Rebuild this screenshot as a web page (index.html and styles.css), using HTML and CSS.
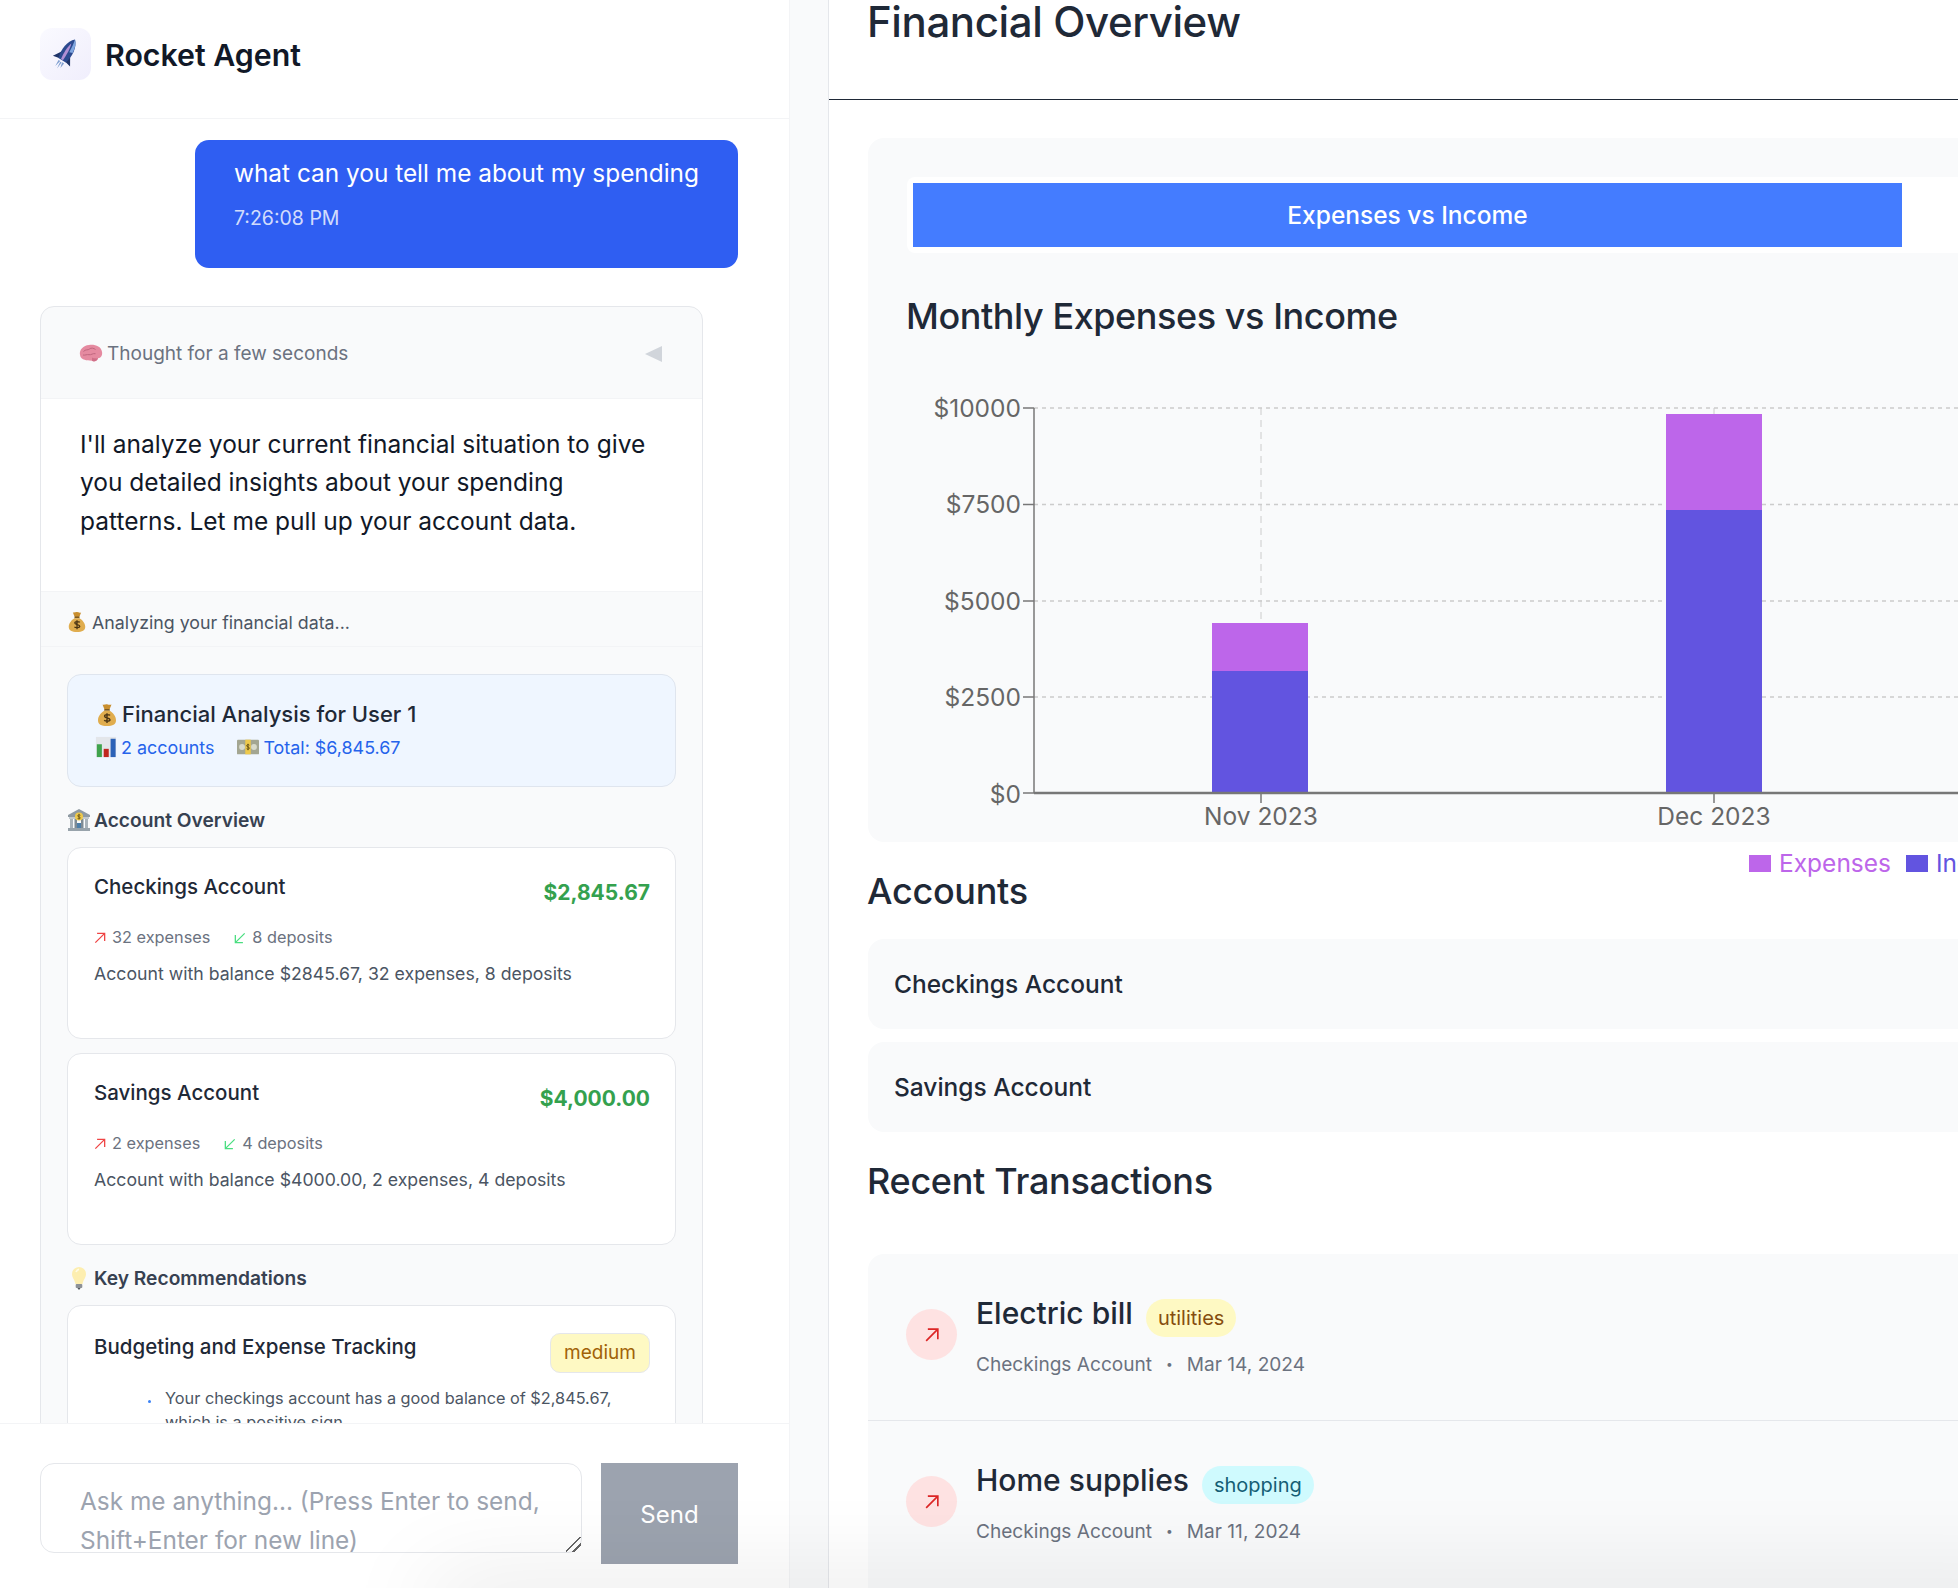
FILE: index.html
```html
<!DOCTYPE html>
<html lang="en">
<head>
  <meta charset="UTF-8" />
  <title>Rocket Agent</title>
  <link rel="stylesheet" href="styles.css">
</head>
<body>
  <svg class="icon-defs" aria-hidden="true">
    <symbol id="i-bag" viewBox="0 0 24 24">
      <path d="M7.500 1.500c1.500.8 3-.6 4.500-.3s3 1 4.500.3l-2 5H9.500z" fill="#c98f2f"/>
      <path d="M9.500 6h5l.4 1.800H9.100z" fill="#7d5a22"/>
      <path d="M9.300 7.800h5.400c3.300 2 6.300 5.500 6.300 9.500 0 4.200-3.300 5.700-9 5.700s-9-1.500-9-5.700c0-4 3-7.500 6.300-9.500z" fill="#e0ad4e"/>
      <path d="M15 12.400c-.6-.9-5.400-1.300-5.400.8 0 2.200 5.400 1.300 5.400 3.500 0 2-4.800 1.700-5.800.6M12 10.200v9.800" fill="none" stroke="#4a3413" stroke-width="1.400"/>
    </symbol>
    <symbol id="i-chart" viewBox="0 0 24 24">
      <rect x="1" y="1" width="22" height="22" fill="#e3e6ea"/>
      <rect x="2" y="9" width="5.500" height="14" fill="#3fa34d"/>
      <rect x="9.500" y="14" width="5.500" height="9" fill="#c0271f"/>
      <rect x="17" y="3" width="5.500" height="20" fill="#2b62b8"/>
    </symbol>
    <symbol id="i-note" viewBox="0 0 24 24">
      <rect x="0" y="4" width="24" height="16" rx="1" fill="#a3a692"/>
      <circle cx="5.500" cy="12" r="3.200" fill="#d8dacb"/>
      <circle cx="18.500" cy="12" r="3.200" fill="#d8dacb"/>
      <rect x="9" y="4" width="6" height="16" fill="#eec94b"/>
      <path d="M13.500 10c-.5-.8-3-.8-3 .7s3 .9 3 2.500-2.500 1.400-3 .7M12 8.500v7" fill="none" stroke="#5d4a12" stroke-width="1"/>
    </symbol>
    <symbol id="i-bank" viewBox="0 0 24 24">
      <path d="M12 1 23 7v2H1V7z" fill="#8f9aa3"/>
      <rect x="2" y="9" width="20" height="2" fill="#c2c9ce"/>
      <rect x="3" y="11" width="3" height="9" fill="#a9b3ba"/>
      <rect x="7.500" y="11" width="2.500" height="9" fill="#7f8b94"/>
      <rect x="14" y="11" width="2.500" height="9" fill="#7f8b94"/>
      <rect x="18" y="11" width="3" height="9" fill="#a9b3ba"/>
      <rect x="10" y="15" width="4" height="5" fill="#4d7ea8"/>
      <rect x="1" y="20" width="22" height="3" fill="#98a3ab"/>
      <circle cx="12" cy="8.500" r="4" fill="#eec94b"/>
      <path d="M13.400 7.300c-.5-.6-2.800-.6-2.800.6s2.800.8 2.800 2-2.400 1.100-2.800.6M12 5.800v5.400" fill="none" stroke="#5d4a12" stroke-width=".8"/>
    </symbol>
    <symbol id="i-bulb" viewBox="0 0 24 24">
      <path d="M12 1c4.200 0 7 3.200 7 7 0 3.500-2.600 5.500-3.500 10h-7C7.600 13.500 5 11.500 5 8c0-3.800 2.800-7 7-7z" fill="#fdeeb0"/>
      <path d="M9 6c.8-1.600 2-2.400 3-2.600" fill="none" stroke="#fffbe6" stroke-width="1.600"/>
      <rect x="8.700" y="18" width="6.600" height="4" rx="1" fill="#8d9196"/>
      <path d="M10.500 22h3l-.8 1.500h-1.400z" fill="#55585c"/>
    </symbol>
    <symbol id="i-brain" viewBox="0 0 24 24">
      <path d="M1 13C0 7.500 4.500 3.500 10 3c5.500-.8 12 1 13 6.800.7 3.700-1 6.200-4 6.500-.6 2.700-3.800 3.900-6 2.500C9.500 18.300 7.800 18.900 5.600 17.800 3.400 17.400 1.500 15.900 1 13z" fill="#e58aa0"/>
      <path d="M4.500 9.500c2-2.500 4.500-1 6-2.500s4.500-.8 6 .5M4 13c2 .5 4-.8 6-.3s4-1.700 6.500-1" fill="none" stroke="#c0677f" stroke-width="1"/>
      <path d="M13 15.500c1.800 1 4.500 1 6 .8-.6 2.700-3.800 3.700-6 2.400z" fill="#cf6f88"/>
    </symbol>
  </svg>

  <section class="chat">
    <header class="chat-head">
      <div class="logo">
        <svg class="logo-rocket" viewBox="0 0 32 32">
          <g transform="rotate(32 16 16)">
            <path d="M12 15 6.500 24l6.500-1.500zM20 15l5.500 9-6.500-1.500z" fill="#1f3468"/>
            <path d="M16 0c5.500 5 6.500 15 4 23h-8C9.500 15 10.500 5 16 0z" fill="#2c4a8f"/>
            <path d="M16 0c3 2.500 4.500 7 4.800 12l-3 1C17.500 8 17 4 16 0z" fill="#7fa6e0"/>
            <path d="M15 5c-1.500 5-1.500 12-.5 17.500h2.200C17 16 16.600 9 15 5z" fill="#b08fd4"/>
            <path d="M13 24.500h2L13.500 31zM17 24.500h2.200L18.500 30zM15.200 25h1.600L16 32z" fill="#7f9fd0"/>
          </g>
        </svg>
      </div>
      <h1 class="brand">Rocket Agent</h1>
    </header>

    <div class="messages">
      <div class="bubble">
        <p class="bubble-text">what can you tell me about my spending</p>
        <p class="bubble-time">7:26:08 PM</p>
      </div>

      <article class="reply">
        <div class="thought">
          <span class="thought-label"><svg class="emoji"><use href="#i-brain"/></svg>Thought for a few seconds</span>
          <svg class="caret" viewBox="0 0 17 16"><polygon points="17,0 17,16 0,8"/></svg>
        </div>
        <p class="reply-text">I'll analyze your current financial situation to give you detailed insights about your spending patterns. Let me pull up your account data.</p>
        <div class="status"><svg class="emoji"><use href="#i-bag"/></svg>Analyzing your financial data...</div>

        <div class="analysis">
          <div class="summary">
            <div class="summary-title"><svg class="emoji"><use href="#i-bag"/></svg>Financial Analysis for User 1</div>
            <div class="summary-meta">
              <span><svg class="emoji"><use href="#i-chart"/></svg>2 accounts</span>
              <span><svg class="emoji"><use href="#i-note"/></svg>Total: $6,845.67</span>
            </div>
          </div>

          <h4 class="section-title"><svg class="emoji"><use href="#i-bank"/></svg>Account Overview</h4>
          <div class="acct-card">
            <div class="acct-top">
              <span class="acct-name">Checkings Account</span>
              <span class="acct-amount">$2,845.67</span>
            </div>
            <div class="acct-stats">
              <span><svg class="stat-arrow up" viewBox="0 0 24 24"><path d="M4 20 20 4M7 4h13v13"/></svg>32 expenses</span>
              <span><svg class="stat-arrow down" viewBox="0 0 24 24"><path d="M20 4 4 20M4 7v13h13"/></svg>8 deposits</span>
            </div>
            <p class="acct-desc">Account with balance $2845.67, 32 expenses, 8 deposits</p>
          </div>
          <div class="acct-card">
            <div class="acct-top">
              <span class="acct-name">Savings Account</span>
              <span class="acct-amount">$4,000.00</span>
            </div>
            <div class="acct-stats">
              <span><svg class="stat-arrow up" viewBox="0 0 24 24"><path d="M4 20 20 4M7 4h13v13"/></svg>2 expenses</span>
              <span><svg class="stat-arrow down" viewBox="0 0 24 24"><path d="M20 4 4 20M4 7v13h13"/></svg>4 deposits</span>
            </div>
            <p class="acct-desc">Account with balance $4000.00, 2 expenses, 4 deposits</p>
          </div>

          <h4 class="section-title"><svg class="emoji"><use href="#i-bulb"/></svg>Key Recommendations</h4>
          <div class="acct-card">
            <div class="rec-top">
              <span class="acct-name">Budgeting and Expense Tracking</span>
              <span class="priority">medium</span>
            </div>
            <ul class="rec-list">
              <li>Your checkings account has a good balance of $2,845.67, which is a positive sign.</li>
            </ul>
          </div>
        </div>
      </article>
    </div>

    <form class="composer">
      <textarea class="composer-input" placeholder="Ask me anything... (Press Enter to send, Shift+Enter for new line)"></textarea>
      <button class="send" type="button">Send</button>
    </form>
  </section>

  <main class="overview">
    <header class="overview-head">
      <h1 class="overview-title">Financial Overview</h1>
    </header>

    <div class="overview-body">
      <section class="chart-card">
        <div class="tabs"><button class="tab" type="button">Expenses vs Income</button></div>
        <h2 class="chart-title">Monthly Expenses vs Income</h2>
        <svg class="chart" viewBox="907 360 1100 482">
          <g class="grid">
            <line x1="1034" y1="408" x2="2008" y2="408"/>
            <line x1="1034" y1="504.500" x2="2008" y2="504.500"/>
            <line x1="1034" y1="601" x2="2008" y2="601"/>
            <line x1="1034" y1="697" x2="2008" y2="697"/>
            <line class="grid-v" x1="1261" y1="408" x2="1261" y2="793"/>
            <line class="grid-v" x1="1714" y1="408" x2="1714" y2="793"/>
          </g>
          <rect class="bar-income" x="1212" y="671" width="96" height="122.500"/>
          <rect class="bar-expense" x="1212" y="623" width="96" height="48"/>
          <rect class="bar-income" x="1666" y="510" width="96" height="283.500"/>
          <rect class="bar-expense" x="1666" y="414" width="96" height="96"/>
          <g class="axis">
            <line x1="1034" y1="408" x2="1034" y2="793"/>
            <line class="axis-base" x1="1034" y1="793" x2="2008" y2="793"/>
            <line x1="1023" y1="408" x2="1034" y2="408"/>
            <line x1="1023" y1="504.500" x2="1034" y2="504.500"/>
            <line x1="1023" y1="601" x2="1034" y2="601"/>
            <line x1="1023" y1="697" x2="1034" y2="697"/>
            <line x1="1023" y1="793" x2="1034" y2="793"/>
            <line x1="1261" y1="793" x2="1261" y2="803"/>
            <line x1="1714" y1="793" x2="1714" y2="803"/>
          </g>
          <g class="tick-y">
            <text x="1021" y="417">$10000</text>
            <text x="1021" y="513">$7500</text>
            <text x="1021" y="610">$5000</text>
            <text x="1021" y="706">$2500</text>
            <text x="1021" y="803">$0</text>
          </g>
          <g class="tick-x">
            <text x="1261" y="825">Nov 2023</text>
            <text x="1714" y="825">Dec 2023</text>
          </g>
        </svg>
      </section>

      <div class="legend">
        <span class="legend-item expense"><i class="swatch"></i>Expenses</span>
        <span class="legend-item income"><i class="swatch"></i>Income</span>
      </div>

      <h2 class="section-head">Accounts</h2>
      <div class="account-row">Checkings Account</div>
      <div class="account-row">Savings Account</div>

      <h2 class="section-head recent">Recent Transactions</h2>
      <div class="tx-list">
        <div class="tx">
          <span class="tx-icon"><svg viewBox="0 0 24 24"><path d="M5 19 19 5M7 5h12v12"/></svg></span>
          <div>
            <div class="tx-top">
              <span class="tx-name">Electric bill</span>
              <span class="tag utilities">utilities</span>
            </div>
            <div class="tx-meta"><span>Checkings Account</span><span class="dot">•</span><span>Mar 14, 2024</span></div>
          </div>
        </div>
        <div class="tx">
          <span class="tx-icon"><svg viewBox="0 0 24 24"><path d="M5 19 19 5M7 5h12v12"/></svg></span>
          <div>
            <div class="tx-top">
              <span class="tx-name">Home supplies</span>
              <span class="tag shopping">shopping</span>
            </div>
            <div class="tx-meta"><span>Checkings Account</span><span class="dot">•</span><span>Mar 11, 2024</span></div>
          </div>
        </div>
      </div>
    </div>
  </main>

  <div class="edge-shadow"></div>
</body>
</html>
```

FILE: styles.css
```css
* {
  box-sizing: border-box;
}
html, body {
  height: 100%;
}
body {
  margin: 0;
  display: flex;
  overflow: hidden;
  font-family: "Inter", "Liberation Sans", sans-serif;
  background-color: #f9fafb;
  color: #111827;
}
h1, h2, h4, p, ul {
  margin: 0;
  padding: 0;
}
.icon-defs {
  position: absolute;
  width: 0;
  height: 0;
}
.emoji {
  width: 22px;
  height: 22px;
  margin: 0 4px 0 -1px;
  vertical-align: -4px;
}

/* chat column */
.chat {
  width: 790px;
  height: 1588px;
  flex: none;
  display: flex;
  flex-direction: column;
  background-color: white;
  border-right: 1px solid #f3f4f6;
}
.chat-head {
  height: 119px;
  flex: none;
  display: flex;
  align-items: flex-start;
  gap: 14px;
  padding: 28px 40px 0;
  border-bottom: 1px solid #f3f4f6;
}
.logo {
  width: 51px;
  height: 52px;
  display: flex;
  align-items: center;
  justify-content: center;
  border-radius: 12px;
  background: linear-gradient(135deg, #fafaff, #f0eefc);
}
.logo-rocket {
  width: 34px;
  height: 34px;
}
.brand {
  font-size: 30.300px;
  font-weight: 600;
  line-height: 54px;
  color: #111827;
}
.messages {
  flex: 1;
  min-height: 0;
  overflow: hidden;
  display: flex;
  flex-direction: column;
  padding: 21px 51px 0 40px;
}
.bubble {
  align-self: flex-end;
  flex: none;
  height: 128px;
  padding: 14px 39px 0;
  border-radius: 14px;
  background-color: #2f5ef2;
  color: white;
}
.bubble-text {
  font-size: 24.400px;
  line-height: 38px;
}
.bubble-time {
  margin-top: 14px;
  font-size: 19.500px;
  line-height: 24px;
  color: rgba(255, 255, 255, 0.8);
}
.reply {
  width: 663px;
  flex: none;
  margin-top: 38px;
  border: 1px solid #e5e7eb;
  border-radius: 14px 14px 0 0;
  background-color: #f9fafb;
}
.thought {
  height: 92px;
  display: flex;
  align-items: center;
  justify-content: space-between;
  padding: 2px 40px 0 38px;
  border-bottom: 1px solid #f3f4f6;
}
.thought-label {
  font-size: 19px;
  color: #6b7280;
}
.thought-label .emoji {
  width: 24px;
  height: 24px;
  margin: 0 4px 0 0;
  vertical-align: -6px;
}
.caret {
  width: 17px;
  height: 16px;
  fill: #d1d5db;
}
.reply-text {
  padding: 26px 39px 51px;
  background-color: white;
  font-size: 24.500px;
  line-height: 38.400px;
  color: #111827;
}
.status {
  height: 56px;
  padding: 19px 26px 0;
  border-top: 1px solid #f3f4f6;
  border-bottom: 1px solid #f3f4f6;
  font-size: 17.800px;
  line-height: 22px;
  color: #4b5563;
}
.analysis {
  padding: 27px 26px 0;
}
.summary {
  height: 113px;
  padding: 25px 28px 0;
  border: 1px solid #dfe5ee;
  border-radius: 14px;
  background-color: #eff6ff;
}
.summary-title {
  font-size: 22px;
  line-height: 28px;
  font-weight: 500;
  color: #1f2937;
}
.summary-title .emoji {
  width: 24px;
  height: 24px;
  margin: 0 3px 0 -1px;
  vertical-align: -5px;
}
.summary-meta {
  display: flex;
  gap: 24px;
  margin-top: 8px;
  font-size: 17.900px;
  line-height: 22px;
  color: #2563eb;
}
.section-title {
  margin-top: 20px;
  font-size: 19.200px;
  line-height: 26px;
  font-weight: 600;
  color: #374151;
}
.section-title .emoji {
  width: 24px;
  height: 24px;
  margin: 0 3px 0 0;
  vertical-align: -5px;
}
.acct-card {
  height: 192px;
  margin: 14px 0;
  padding: 26px 25px 0 26px;
  border: 1px solid #e5e7eb;
  border-radius: 14px;
  background-color: white;
}
.acct-top {
  display: flex;
  justify-content: space-between;
}
.acct-name {
  font-size: 20.500px;
  line-height: 26px;
  font-weight: 500;
  color: #1f2937;
}
.acct-amount {
  margin-top: 6px;
  font-size: 21px;
  line-height: 26px;
  font-weight: 700;
  color: #34a14e;
}
.acct-stats {
  display: flex;
  gap: 24px;
  margin-top: 19px;
  font-size: 16.300px;
  line-height: 24px;
  color: #6b7280;
}
.stat-arrow {
  width: 14px;
  height: 14px;
  margin: 0 5px 0 -1px;
  vertical-align: -2px;
  fill: none;
  stroke-width: 2.200;
}
.stat-arrow.up {
  stroke: #ef4444;
}
.stat-arrow.down {
  stroke: #4ade80;
}
.acct-desc {
  margin-top: 13px;
  font-size: 17.700px;
  line-height: 24px;
  color: #4b5563;
}
.rec-top {
  display: flex;
  justify-content: space-between;
  margin-bottom: 12px;
}
.rec-top .acct-name {
  margin-top: 2px;
}
.priority {
  width: 100px;
  height: 40px;
  margin-top: 1px;
  text-align: center;
  border: 1px solid #e5e7eb;
  border-radius: 10px;
  background-color: #fef9c3;
  font-size: 19px;
  line-height: 38px;
  color: #a16207;
}
.rec-list {
  list-style: none;
  padding-left: 71px;
  margin-top: 14px;
  font-size: 16.300px;
  line-height: 23.500px;
  color: #4b5563;
  position: relative;
}
.rec-list li::before {
  content: "";
  position: absolute;
  left: 54px;
  top: 13px;
  width: 3px;
  height: 3px;
  border-radius: 50%;
  background-color: #3b82f6;
}
.composer {
  height: 165px;
  flex: none;
  display: flex;
  align-items: flex-start;
  gap: 19px;
  padding: 39px 51px 0 40px;
  border-top: 1px solid #f3f4f6;
  background-color: white;
}
.composer-input {
  width: 542px;
  height: 90px;
  padding: 18px 30px 0 39px;
  border: 1px solid #e5e7eb;
  border-radius: 14px;
  outline: none;
  font-family: inherit;
  font-size: 24.400px;
  line-height: 38.500px;
  overflow: hidden;
  resize: both;
}
.composer-input::placeholder {
  color: #9ca3af;
}
.composer-input::-webkit-resizer {
  background: linear-gradient(135deg, transparent 46%, #666 46%, #666 53%, transparent 53%, transparent 70%, #666 70%, #666 77%, transparent 77%);
}
.send {
  width: 137px;
  height: 101px;
  padding: 2px 0 0;
  border: none;
  background-color: #9ca3af;
  color: white;
  font-family: inherit;
  font-size: 24px;
}

/* overview column */
.overview {
  width: 1130px;
  height: 1588px;
  flex: none;
  margin-left: 38px;
  overflow: hidden;
  border-left: 1px solid #e5e7eb;
  background-color: white;
}
.overview-head {
  width: 1500px;
  height: 100px;
  padding-left: 38px;
  border-bottom: 1px solid #1f2937;
}
.overview-title {
  font-size: 42px;
  line-height: 43px;
  font-weight: 500;
  letter-spacing: -0.400px;
  color: #1f2937;
}
.overview-body {
  width: 1500px;
  padding: 38px 0 0 39px;
}
.chart-card {
  height: 704px;
  padding: 39px;
  border-radius: 16px 0 0 16px;
  background-color: #f9fafb;
}
.tabs {
  height: 76px;
  padding: 6px;
  border-radius: 8px;
  background-color: white;
}
.tab {
  width: 989px;
  height: 64px;
  padding: 0;
  border: none;
  background-color: #447cff;
  color: white;
  font-family: inherit;
  font-size: 24.500px;
  font-weight: 500;
}
.chart-title {
  margin-top: 41px;
  margin-left: -1px;
  font-size: 36px;
  line-height: 44px;
  font-weight: 500;
  letter-spacing: -0.430px;
  color: #1f2937;
}
.chart {
  display: block;
  width: 1100px;
  height: 482px;
  margin-top: 22px;
}
.grid line {
  stroke: #ccc;
  stroke-width: 1.500;
  stroke-dasharray: 4 4;
}
.grid .grid-v {
  stroke-width: 1;
  stroke-dasharray: 7 5;
}
.axis line {
  stroke: #777;
  stroke-width: 1.500;
}
.axis .axis-base {
  stroke-width: 2.500;
}
.bar-expense {
  fill: #bd66ea;
}
.bar-income {
  fill: #6254e0;
}
.tick-y text, .tick-x text {
  font-size: 24.500px;
  fill: #666;
}
.tick-y text {
  text-anchor: end;
}
.tick-x text {
  text-anchor: middle;
}
.legend {
  height: 20px;
  display: flex;
  align-items: center;
  gap: 15px;
  margin-top: 11px;
  padding-left: 881px;
  font-size: 24.500px;
}
.legend-item {
  display: flex;
  align-items: center;
  gap: 8px;
}
.legend-item.expense {
  color: #bd66ea;
}
.legend-item.income {
  color: #6254e0;
}
.swatch {
  width: 22px;
  height: 17px;
  background-color: currentColor;
}
.section-head {
  margin-left: -1px;
  font-size: 36px;
  line-height: 36px;
  font-weight: 500;
  letter-spacing: -0.300px;
  color: #1f2937;
  margin-bottom: 30px;
}
.section-head.recent {
  margin-top: 31px;
  margin-bottom: 55px;
}
.account-row {
  height: 90px;
  margin-bottom: 13px;
  padding-left: 26px;
  border-radius: 16px 0 0 16px;
  background-color: #f9fafb;
  font-size: 24.500px;
  font-weight: 500;
  line-height: 91px;
  color: #1f2937;
}
.tx-list {
  border-radius: 16px 0 0 0;
  background-color: #f9fafb;
}
.tx {
  display: flex;
  gap: 19px;
  height: 167px;
  padding: 45px 38px 0;
  border-bottom: 1px solid #e5e7eb;
}
.tx:last-child {
  border-bottom: none;
}
.tx-icon {
  width: 51px;
  height: 51px;
  margin-top: 10px;
  display: flex;
  align-items: center;
  justify-content: center;
  border-radius: 50%;
  background-color: #fee2e2;
}
.tx-icon svg {
  width: 20px;
  height: 20px;
  fill: none;
  stroke: #dc2626;
  stroke-width: 2;
}
.tx-top {
  display: flex;
  align-items: flex-start;
  gap: 13px;
  height: 38px;
}
.tx-name {
  font-size: 30px;
  line-height: 29px;
  font-weight: 500;
  color: #1f2937;
}
.tag {
  height: 38px;
  padding: 0 12px;
  border-radius: 19px;
  font-size: 20px;
  line-height: 39px;
}
.tag.utilities {
  background-color: #fef9c3;
  color: #854d0e;
}
.tag.shopping {
  background-color: #cffafe;
  color: #155e75;
}
.tx-meta {
  display: flex;
  align-items: center;
  gap: 14px;
  margin-top: 15px;
  font-size: 19.100px;
  line-height: 24px;
  color: #6b7280;
}
.tx-meta .dot {
  font-size: 12px;
}

/* shadow thrown up from something just below the fold */
.edge-shadow {
  position: fixed;
  left: 430px;
  right: -100px;
  bottom: -40px;
  height: 40px;
  box-shadow: 0 0 96px rgba(0, 0, 0, 0.14);
  pointer-events: none;
}
```
